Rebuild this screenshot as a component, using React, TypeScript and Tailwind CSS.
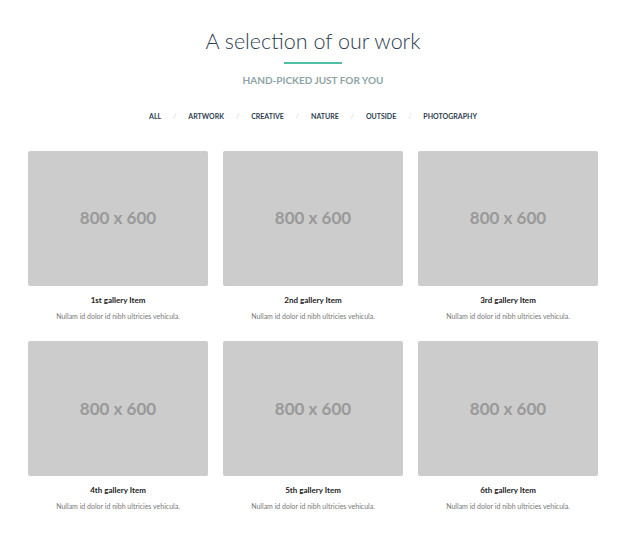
const filters = ["All", "Artwork", "Creative", "Nature", "Outside", "Photography"];

const items = [
  "1st gallery Item",
  "2nd gallery Item",
  "3rd gallery Item",
  "4th gallery Item",
  "5th gallery Item",
  "6th gallery Item",
];

export default function App() {
  return (
    <div className="w-[626px] h-[550px] bg-white font-['Lato',sans-serif] overflow-hidden">
      <div className="flex flex-col items-center pt-[27px]">
        <h1 className="text-[21.5px] font-light leading-[28px] text-[#2c3e50]">A selection of our work</h1>
        <div className="mt-[7px] h-[2px] w-[58px] bg-[#4fbfa8]" />
        <p className="mt-[9px] text-[10px] font-bold leading-[14px] text-[#8fa3a6] uppercase">
          Hand-picked just for you
        </p>
      </div>

      <ul className="mt-[24px] flex justify-center items-center text-[7px] font-bold uppercase text-[#2c3e50]">
        {filters.map((f, i) => (
          <li key={f} className="flex items-center">
            {i > 0 && <span className="mx-[12px] font-normal text-[#d0d4d8]">/</span>}
            <span>{f}</span>
          </li>
        ))}
      </ul>

      <div className="mt-[29px] px-[28px] grid grid-cols-3 gap-x-[15px] gap-y-[20px]">
        {items.map((title) => (
          <div key={title} className="flex flex-col items-center">
            <div className="w-full h-[135px] rounded-[2px] bg-[#cccccc] flex items-center justify-center">
              <span className="text-[17px] font-bold text-[#999999]">800 x 600</span>
            </div>
            <h3 className="mt-[8px] text-[8px] font-bold text-[#222]">{title}</h3>
            <p className="mt-[5px] text-[7px] text-[#777]">Nullam id dolor id nibh ultricies vehicula.</p>
          </div>
        ))}
      </div>
    </div>
  );
}
